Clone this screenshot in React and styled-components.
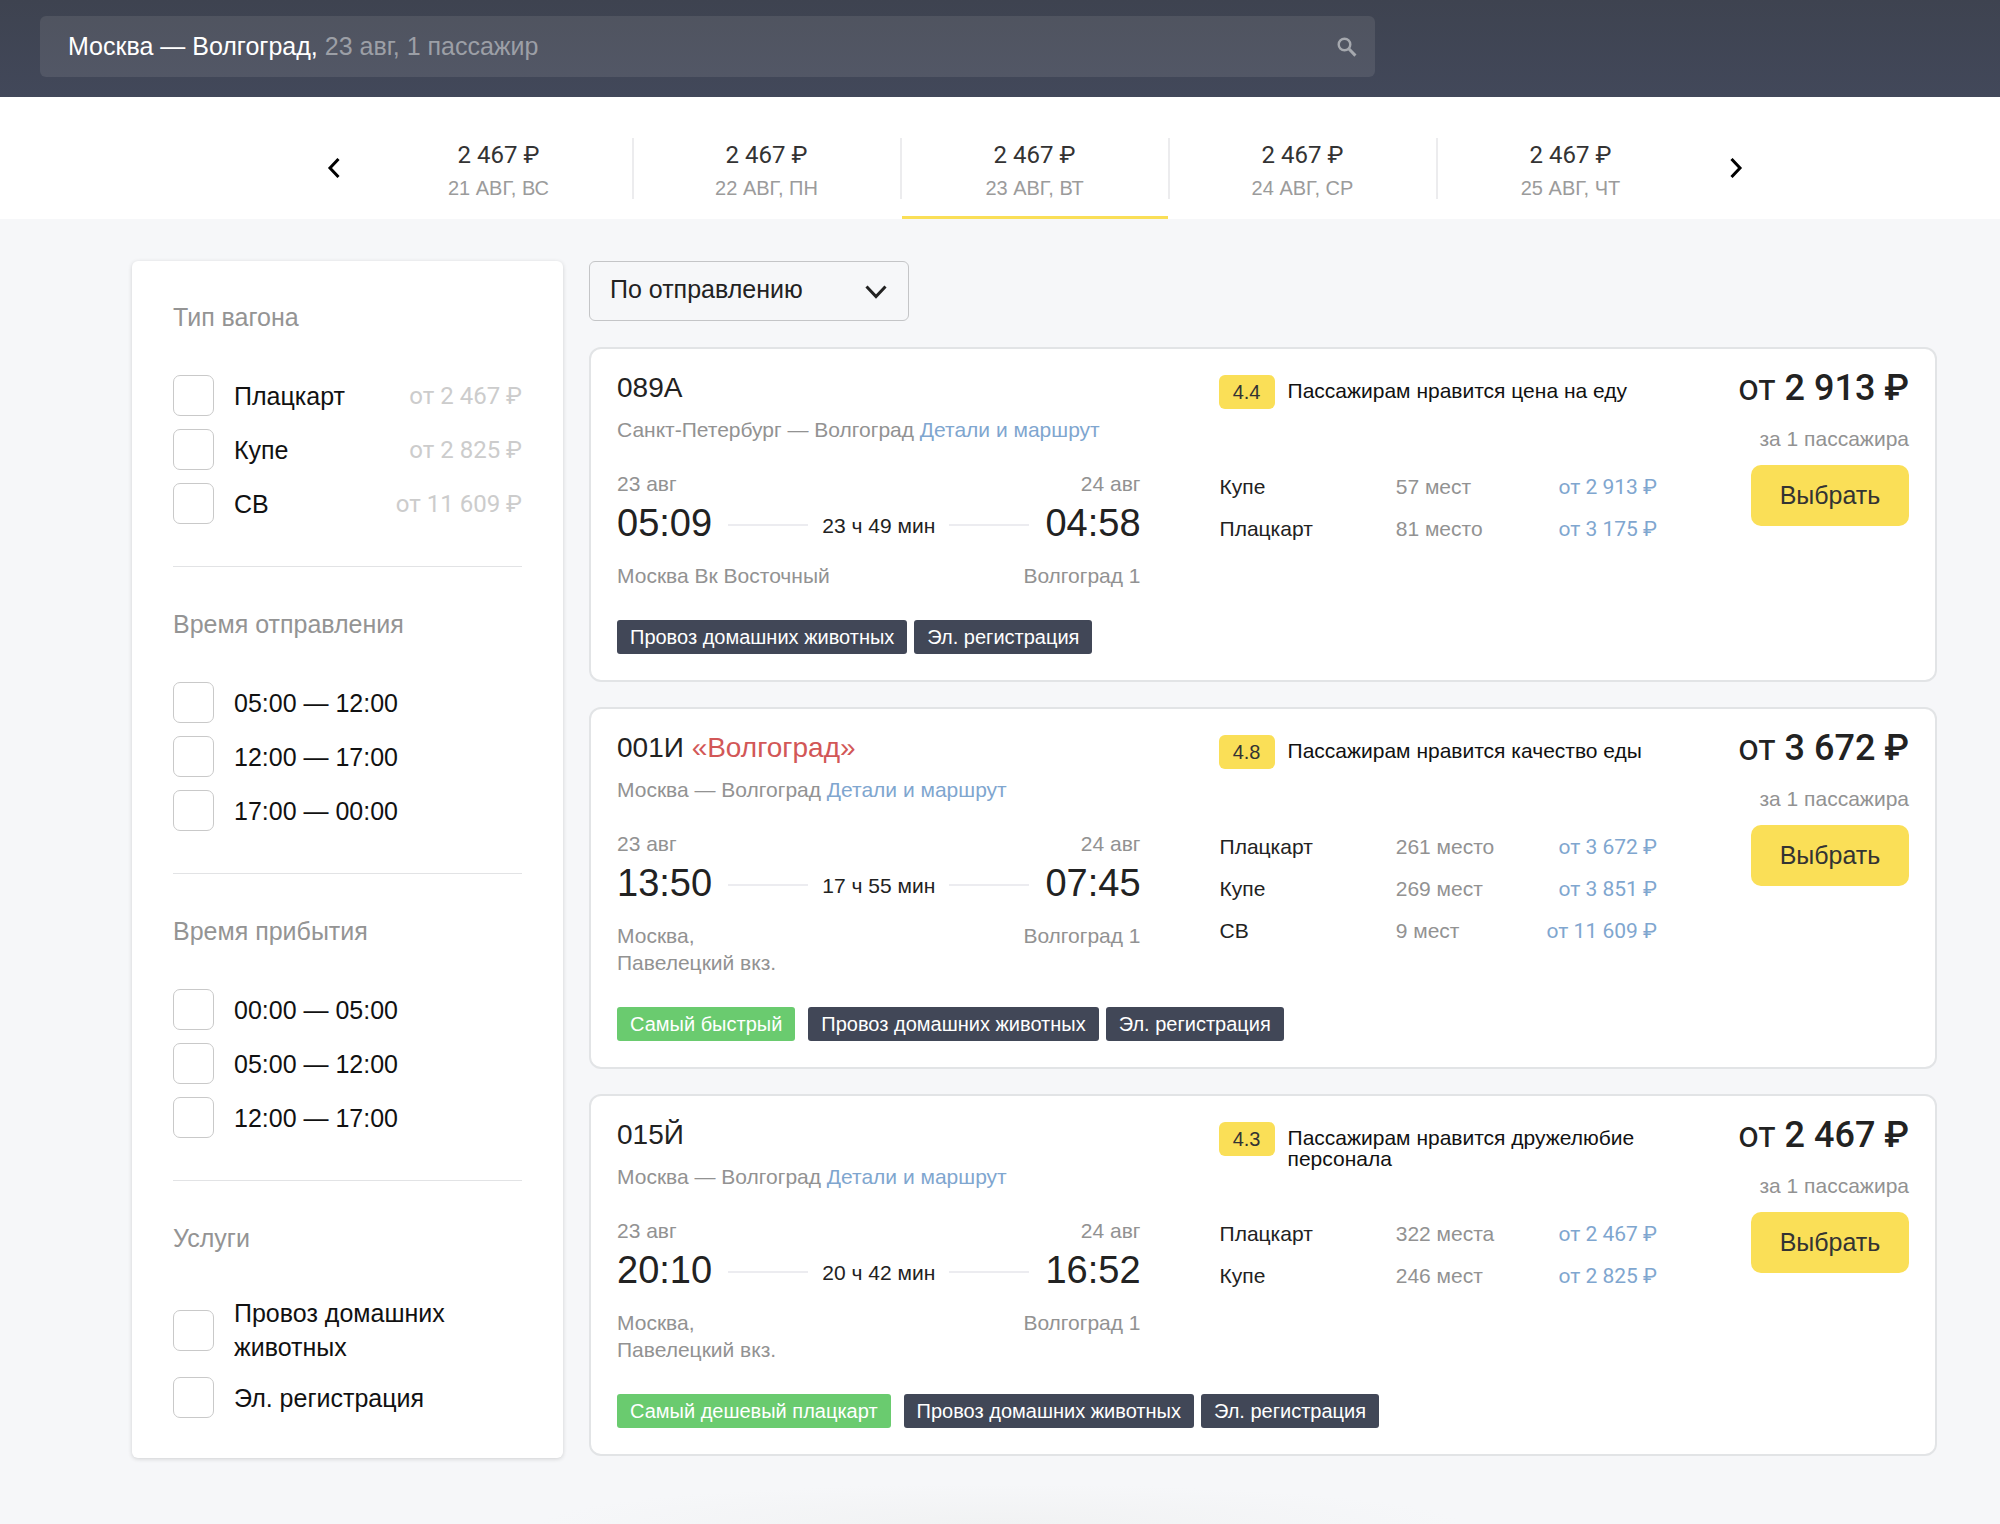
import React, { useState } from 'react'
import styled, { createGlobalStyle } from 'styled-components'


const GlobalStyle = createGlobalStyle`
    *, *::before, *::after {
        box-sizing: border-box;
    }

    body {
        margin: 0;
        background: #f6f7f9;
        color: #222;
        font-family: "Liberation Sans", Arial, sans-serif;
        font-size: 21px;
        line-height: 27px;
    }

    button, select, input {
        font: inherit;
        color: inherit;
    }
`

/* header */

const Header = styled.header`
    padding: 16px 40px 20px;
    background: linear-gradient(#3e4350, #42485a);
`

const SearchField = styled.button`
    display: flex;
    align-items: center;
    width: 70%;
    max-width: 1335px;
    height: 61px;
    padding: 0 18px 0 28px;
    border: 0;
    border-radius: 6px;
    background: rgba(255, 255, 240, 0.09);
    color: #fff;
    font-size: 25px;
    text-align: left;
    cursor: pointer;

    svg {
        margin-left: auto;
    }
`

const SearchMuted = styled.span`
    color: #9c9fa6;
    white-space: pre;
`

/* date strip */

const DateBar = styled.nav`
    display: flex;
    justify-content: center;
    height: 122px;
    padding: 0 63px 0 132px;
    background: #fff;
`

const DateList = styled.div`
    display: flex;
    flex: 0 1 1338px;
    margin: 0 16px;
`

const DateTab = styled.button`
    display: flex;
    flex: 1;
    flex-direction: column;
    align-items: center;
    gap: 6px;
    padding: 45px 0 0;
    border: 0;
    border-right: 2px solid transparent;
    background:
        linear-gradient(#ececee, #ececee) right 41px / 2px 61px no-repeat border-box,
        linear-gradient(#fadf57, #fadf57) left bottom / 100% ${({ $active }) => ($active ? '3px' : '0')} no-repeat padding-box;
    cursor: pointer;

    &:last-child {
        border-right: 0;
        background-size: 0 0, 100% ${({ $active }) => ($active ? '3px' : '0')};
    }
`

const DatePrice = styled.span`
    font-family: Roboto, sans-serif;
    font-size: 24px;
    color: #333;
`

const DateLabel = styled.span`
    font-size: 20px;
    color: #9b9b9b;
`

const ArrowButton = styled.button`
    display: flex;
    align-items: center;
    justify-content: center;
    width: 32px;
    padding: 20px 0 0;
    border: 0;
    background: none;
    cursor: pointer;
`

/* page columns */

const Layout = styled.div`
    display: flex;
    align-items: flex-start;
    gap: 26px;
    padding: 42px 63px 66px 132px;
    background: radial-gradient(460px 40px at 50% 100%, #f1f2f3, #f6f7f9) bottom / 100% 40px no-repeat;
`

const Sidebar = styled.aside`
    flex: 0 0 431px;
    padding: 0 41px;
    border-radius: 6px;
    background: #fff;
    box-shadow: 0 1px 4px rgba(0, 0, 0, 0.16);
`

const FilterGroup = styled.fieldset`
    display: flex;
    flex-direction: column;
    gap: 13px;
    margin: 0;
    padding: 40px 0 42px;
    border: 0;
    border-bottom: 1px solid #e2e3e5;
    font-size: 25px;
    line-height: 34px;

    &:first-child {
        padding-top: 39px;
    }

    &:last-child {
        padding-bottom: 40px;
        border-bottom: 0;
    }
`

const FilterTitle = styled.legend`
    float: left;
    margin-bottom: 28px;
    padding: 0;
    color: #949494;
`

const FilterRow = styled.label`
    display: flex;
    align-items: center;
    gap: 20px;
    color: #111;
    cursor: pointer;
`

const Checkbox = styled.input`
    appearance: none;
    flex: none;
    width: 41px;
    height: 41px;
    margin: 0;
    border: 1px solid #c9c9c9;
    border-radius: 7px;
    background: #fff;

    &:checked {
        background: #fadf57;
    }
`

const FilterPrice = styled.span`
    margin-left: auto;
    font-family: Roboto, sans-serif;
    font-size: 24px;
    color: #ccc;
    white-space: nowrap;
`

const Results = styled.main`
    display: flex;
    flex: 1;
    flex-direction: column;
    gap: 25px;
    min-width: 0;
`

const SortBox = styled.div`
    position: relative;
    width: 320px;
    margin-bottom: 1px;

    svg {
        position: absolute;
        top: 24px;
        right: 22px;
        pointer-events: none;
    }
`

const SortSelect = styled.select`
    appearance: none;
    display: block;
    width: 100%;
    height: 60px;
    padding: 0 50px 3px 20px;
    border: 1px solid #c4c5c7;
    border-radius: 6px;
    background: transparent;
    font-size: 25px;
`

/* train card */

const Card = styled.article`
    display: grid;
    grid-template-columns: minmax(0, 523fr) minmax(0, 440fr) 172px;
    column-gap: 78px;
    padding: 22px 26px 26px;
    border: 2px solid #e2e4e6;
    border-radius: 12px;
    background: #fff;
`

const TrainTitle = styled.h2`
    margin: 0 0 11px;
    font-size: 28px;
    font-weight: 400;
    line-height: 34px;
`

const TrainBrand = styled.span`
    color: #d25757;
`

const Muted = styled.div`
    color: #929292;
`

const DetailsLink = styled.a`
    color: #7fa6cf;
    text-decoration: none;
`

const Dates = styled(Muted)`
    display: flex;
    justify-content: space-between;
    margin-top: 27px;
`

const Times = styled.div`
    display: flex;
    align-items: center;
    gap: 16px;
    margin: 5px 0 18px;
`

const Clock = styled.time`
    font-size: 38px;
    line-height: 42px;
`

const Duration = styled.div`
    display: flex;
    flex: 1;
    align-items: center;
    gap: 14px;
    padding-top: 4px;
    white-space: nowrap;

    &::before, &::after {
        content: "";
        flex: 1;
        height: 2px;
        background: #ececf0;
    }
`

const Stations = styled(Muted)`
    display: flex;
    justify-content: space-between;
`

const Station = styled.span`
    max-width: 228px;
`

const Tags = styled.div`
    display: flex;
    grid-column: 1 / -1;
    gap: 7px;
    margin-top: 31px;
`

const Tag = styled.span`
    padding: 0 13px;
    margin-right: ${({ $accent }) => ($accent ? '6px' : '0')};
    border-radius: 3px;
    background: ${({ $accent }) => ($accent ? '#6acb6f' : '#414757')};
    color: #fff;
    font-size: 20px;
    line-height: 34px;
`

const Rating = styled.div`
    display: flex;
    align-items: flex-start;
    gap: 13px;
    height: 68px;
    margin: 4px 0 23px;
    color: #111;
`

const Score = styled.span`
    flex: 0 0 56px;
    border-radius: 6px;
    background: #fadf57;
    color: #333;
    font-size: 20px;
    line-height: 34px;
    text-align: center;
`

const RatingText = styled.p`
    margin: 5px 0 0;
    line-height: 21px;
`

const Seats = styled.table`
    width: 100%;
    border-collapse: collapse;
    table-layout: fixed;

    td {
        height: 42px;
        padding: 0 2px 2px 1px;
        color: #929292;
    }

    td:first-child {
        width: 40%;
        color: #222;
    }

    td:last-child {
        width: 32%;
        padding-bottom: 0;
        font-family: Roboto, sans-serif;
        text-align: right;
    }
`

const Offer = styled.div`
    display: flex;
    flex-direction: column;
    align-items: flex-end;
    white-space: nowrap;
`

const Price = styled.div`
    margin-bottom: 20px;
    font-family: Roboto, sans-serif;
    font-size: 36px;
    line-height: 34px;

    b {
        font-weight: 500;
    }
`

const SelectButton = styled.button`
    width: 158px;
    height: 61px;
    margin-top: 13px;
    border: 0;
    border-radius: 10px;
    background: #fadf57;
    color: #333;
    font-size: 25px;
    cursor: pointer;
`

const days = ['21 АВГ, ВС', '22 АВГ, ПН', '23 АВГ, ВТ', '24 АВГ, СР', '25 АВГ, ЧТ']

const filters = [
    {
        title: 'Тип вагона',
        options: [
            { label: 'Плацкарт', price: 'от 2 467 ₽' },
            { label: 'Купе', price: 'от 2 825 ₽' },
            { label: 'СВ', price: 'от 11 609 ₽' },
        ],
    },
    {
        title: 'Время отправления',
        options: [{ label: '05:00 — 12:00' }, { label: '12:00 — 17:00' }, { label: '17:00 — 00:00' }],
    },
    {
        title: 'Время прибытия',
        options: [{ label: '00:00 — 05:00' }, { label: '05:00 — 12:00' }, { label: '12:00 — 17:00' }],
    },
    {
        title: 'Услуги',
        options: [{ label: 'Провоз домашних животных' }, { label: 'Эл. регистрация' }],
    },
]

// \u00a0 keeps the station name on one line
const trains = [
    {
        number: '089А',
        route: 'Санкт-Петербург — Волгоград',
        departure: '05:09',
        arrival: '04:58',
        duration: '23 ч 49 мин',
        from: 'Москва Вк Восточный',
        score: '4.4',
        review: 'Пассажирам нравится цена на еду',
        price: '2 913 ₽',
        seats: [
            ['Купе', '57 мест', 'от 2 913 ₽'],
            ['Плацкарт', '81 место', 'от 3 175 ₽'],
        ],
    },
    {
        number: '001И',
        brand: '«Волгоград»',
        route: 'Москва — Волгоград',
        departure: '13:50',
        arrival: '07:45',
        duration: '17 ч 55 мин',
        from: 'Москва, Павелецкий\u00a0вкз.',
        score: '4.8',
        review: 'Пассажирам нравится качество еды',
        price: '3 672 ₽',
        badge: 'Самый быстрый',
        seats: [
            ['Плацкарт', '261 место', 'от 3 672 ₽'],
            ['Купе', '269 мест', 'от 3 851 ₽'],
            ['СВ', '9 мест', 'от 11 609 ₽'],
        ],
    },
    {
        number: '015Й',
        route: 'Москва — Волгоград',
        departure: '20:10',
        arrival: '16:52',
        duration: '20 ч 42 мин',
        from: 'Москва, Павелецкий\u00a0вкз.',
        score: '4.3',
        review: 'Пассажирам нравится дружелюбие персонала',
        price: '2 467 ₽',
        badge: 'Самый дешевый плацкарт',
        seats: [
            ['Плацкарт', '322 места', 'от 2 467 ₽'],
            ['Купе', '246 мест', 'от 2 825 ₽'],
        ],
    },
]


function SearchIcon() {
    return (
        <svg width="20" height="20" viewBox="0 0 20 20" fill="none" stroke="#a5a8ae" strokeWidth="2.4">
            <circle cx="7.5" cy="7.5" r="5.8" />
            <path d="M11.8 11.8l6.6 6.8" strokeWidth="3" />
        </svg>
    )
}

function Arrow({ right }) {
    return (
        <svg width="14" height="20" viewBox="0 0 14 20" fill="none" stroke="#000" strokeWidth="3">
            <path d={right ? 'M2.5 1l8.5 9-8.5 9' : 'M11.5 1L3 10l8.5 9'} />
        </svg>
    )
}

function TrainCard({ train }) {
    return (
        <Card>
            <div>
                <TrainTitle>
                    {train.number} {train.brand && <TrainBrand>{train.brand}</TrainBrand>}
                </TrainTitle>
                <Muted>
                    {train.route} <DetailsLink href="#details">Детали и маршрут</DetailsLink>
                </Muted>
                <Dates>
                    <span>23 авг</span>
                    <span>24 авг</span>
                </Dates>
                <Times>
                    <Clock>{train.departure}</Clock>
                    <Duration>{train.duration}</Duration>
                    <Clock>{train.arrival}</Clock>
                </Times>
                <Stations>
                    <Station>{train.from}</Station>
                    <Station>Волгоград 1</Station>
                </Stations>
            </div>

            <div>
                <Rating>
                    <Score>{train.score}</Score>
                    <RatingText>{train.review}</RatingText>
                </Rating>
                <Seats>
                    <tbody>
                        {train.seats.map(([type, count, price]) => (
                            <tr key={type}>
                                <td>{type}</td>
                                <td>{count}</td>
                                <td><DetailsLink href="#seats">{price}</DetailsLink></td>
                            </tr>
                        ))}
                    </tbody>
                </Seats>
            </div>

            <Offer>
                <Price>от <b>{train.price}</b></Price>
                <Muted>за 1 пассажира</Muted>
                <SelectButton type="button">Выбрать</SelectButton>
            </Offer>

            <Tags>
                {train.badge && <Tag $accent>{train.badge}</Tag>}
                <Tag>Провоз домашних животных</Tag>
                <Tag>Эл. регистрация</Tag>
            </Tags>
        </Card>
    )
}

export default function App() {
    const [day, setDay] = useState(2)

    return (
        <>
            <GlobalStyle />

            <Header>
                <SearchField type="button">
                    Москва — Волгоград,<SearchMuted> 23 авг, 1 пассажир</SearchMuted>
                    <SearchIcon />
                </SearchField>
            </Header>

            <DateBar>
                <ArrowButton type="button" aria-label="Предыдущие даты"><Arrow /></ArrowButton>
                <DateList>
                    {days.map((label, i) => (
                        <DateTab key={label} type="button" $active={i === day} onClick={() => setDay(i)}>
                            <DatePrice>2 467 ₽</DatePrice>
                            <DateLabel>{label}</DateLabel>
                        </DateTab>
                    ))}
                </DateList>
                <ArrowButton type="button" aria-label="Следующие даты"><Arrow right /></ArrowButton>
            </DateBar>

            <Layout>
                <Sidebar>
                    {filters.map((group) => (
                        <FilterGroup key={group.title}>
                            <FilterTitle>{group.title}</FilterTitle>
                            {group.options.map((option) => (
                                <FilterRow key={option.label}>
                                    <Checkbox type="checkbox" />
                                    <span>{option.label}</span>
                                    {option.price && <FilterPrice>{option.price}</FilterPrice>}
                                </FilterRow>
                            ))}
                        </FilterGroup>
                    ))}
                </Sidebar>

                <Results>
                    <SortBox>
                        <SortSelect aria-label="Сортировка">
                            <option>По отправлению</option>
                            <option>По цене</option>
                        </SortSelect>
                        <svg width="22" height="14" viewBox="0 0 22 14" fill="none" stroke="#222" strokeWidth="3">
                            <path d="M1.5 1.5l9.5 10 9.5-10" />
                        </svg>
                    </SortBox>
                    {trains.map((train) => (
                        <TrainCard key={train.number} train={train} />
                    ))}
                </Results>
            </Layout>
        </>
    )
}
